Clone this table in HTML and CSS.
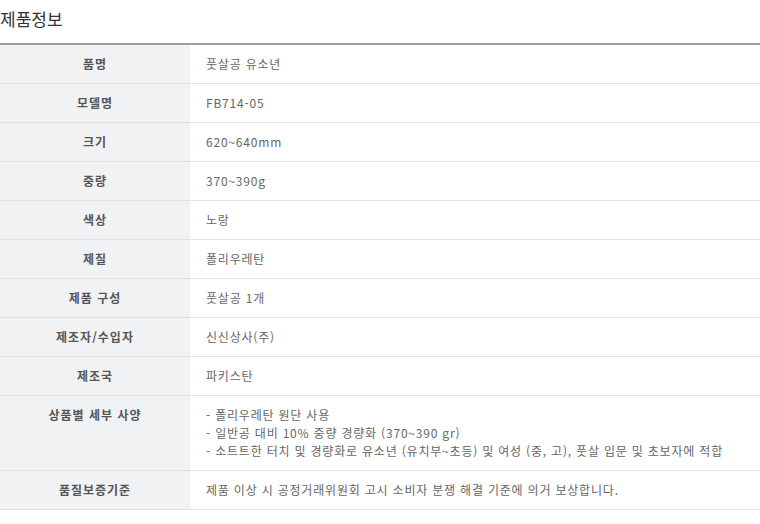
FILE: index.html
```html
<!DOCTYPE html>
<html lang="ko">
<head>
<meta charset="utf-8">
<link rel="stylesheet" href="styles.css">
</head>
<body>
<div class="info">
  <h2 class="info-title">제품정보</h2>
  <table class="info-table">
    <tr><th>품명</th><td>풋살공 유소년</td></tr>
    <tr><th>모델명</th><td>FB714-05</td></tr>
    <tr><th>크기</th><td>620~640mm</td></tr>
    <tr><th>중량</th><td>370~390g</td></tr>
    <tr><th>색상</th><td>노랑</td></tr>
    <tr><th>제질</th><td>폴리우레탄</td></tr>
    <tr><th>제품 구성</th><td>풋살공 1개</td></tr>
    <tr><th>제조자/수입자</th><td>신신상사(주)</td></tr>
    <tr><th>제조국</th><td>파키스탄</td></tr>
    <tr class="tall"><th>상품별 세부 사양</th><td>- 폴리우레탄 원단 사용<br>- 일반공 대비 10% 중량 경량화 (370~390 gr)<br>- 소트트한 터치 및 경량화로 유소년 (유치부~초등) 및 여성 (중, 고), 풋살 입문 및 초보자에 적합</td></tr>
    <tr><th>품질보증기준</th><td>제품 이상 시 공정거래위원회 고시 소비자 분쟁 해결 기준에 의거 보상합니다.</td></tr>
  </table>
</div>
</body>
</html>
```
FILE: styles.css
```css
html, body {
  margin: 0;
  padding: 0;
  background: #fff;
}
body {
  font-family: "Noto Sans CJK KR", "Noto Sans", sans-serif;
}
.info-title {
  margin: 0;
  height: 43px;
  line-height: 38px;
  font-size: 17px;
  font-weight: normal;
  color: #333;
  letter-spacing: 0;
}
.info-table {
  width: 760px;
  border-collapse: collapse;
  border-top: 2px solid #9a9d9d;
  table-layout: fixed;
}
.info-table th,
.info-table td {
  border-bottom: 1px solid #e1e1e1;
  padding: 10px 0 10px 0;
  font-size: 12px;
  line-height: 18px;
  height: 18px;
}
.info-table th {
  width: 190px;
  background: #f1f2f4;
  color: #555;
  font-weight: bold;
  text-align: center;
  vertical-align: top;
  letter-spacing: 1px;
}
.info-table td {
  padding-left: 16px;
  color: #666;
  text-align: left;
  vertical-align: top;
  letter-spacing: 0.8px;
}
```
